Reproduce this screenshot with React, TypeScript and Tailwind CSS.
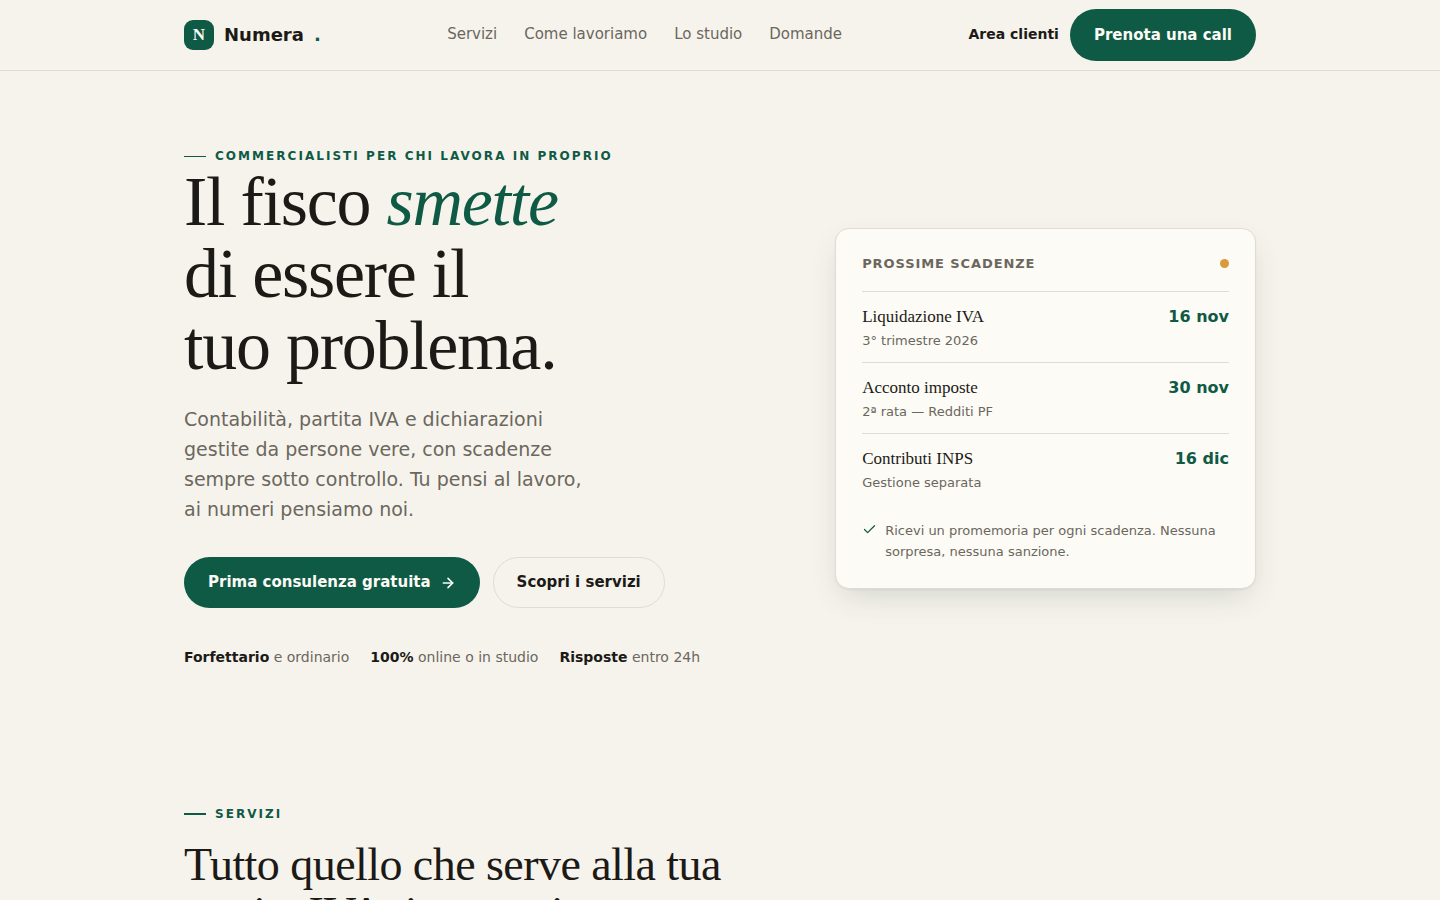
import React from 'react';
import { ArrowRight, Check } from 'lucide-react';

const navItems = [
    { label: 'Servizi', href: '#servizi' },
    { label: 'Come lavoriamo', href: '#metodo' },
    { label: 'Lo studio', href: '#studio' },
    { label: 'Domande', href: '#domande' },
];

const deadlines = [
    { title: 'Liquidazione IVA', detail: '3° trimestre 2026', date: '16 nov' },
    { title: 'Acconto imposte', detail: '2ª rata — Redditi PF', date: '30 nov' },
    { title: 'Contributi INPS', detail: 'Gestione separata', date: '16 dic' },
];

const facts = [
    { strong: 'Forfettario', text: 'e ordinario' },
    { strong: '100%', text: 'online o in studio' },
    { strong: 'Risposte', text: 'entro 24h' },
];

const Eyebrow: React.FC<{ children: React.ReactNode; thick?: boolean }> = ({ children, thick }) => (
    <p className="flex items-center gap-[9px] text-xs leading-5 font-bold uppercase tracking-[0.17em] text-[#0f5a45]">
        <span className={`w-[22px] bg-[#0f5a45] ${thick ? 'h-0.5' : 'h-px'}`} />
        {children}
    </p>
);

const Header: React.FC = () => (
    <header className="border-b border-[#dedcd4]">
        <div className="max-w-[1120px] mx-auto px-6 h-[70px] flex items-center justify-between">
            <a href="#" className="flex items-center gap-2.5 text-lg font-bold">
                <span className="w-[30px] h-[30px] rounded-[9px] bg-[#0f5a45] text-[#fcfbf6] text-[17px] font-['Liberation_Serif',serif] flex items-center justify-center">
                    N
                </span>
                Numera
                <span className="text-[#0f5a45]">.</span>
            </a>

            <nav className="flex items-center gap-[27px] pb-0.5 text-[15px] text-[#6b675d]">
                {navItems.map((item) => (
                    <a key={item.href} href={item.href}>{item.label}</a>
                ))}
            </nav>

            <div className="flex items-center gap-[11px]">
                <a href="#area" className="pb-0.5 text-sm font-bold">Area clienti</a>
                <a
                    href="#call"
                    className="h-[52px] px-6 rounded-full bg-[#0f5a45] text-[#fcfbf6] text-[15px] font-bold flex items-center"
                >
                    Prenota una call
                </a>
            </div>
        </div>
    </header>
);

const DeadlineCard: React.FC = () => (
    <aside className="rounded-[14px] border border-[#dedcd4] bg-[#fcfbf6] px-[26px] pt-[25px] pb-[26px] shadow-[0_1px_2px_rgba(28,26,22,0.05),0_12px_32px_-8px_rgba(20,60,45,0.18)]">
        <div className="flex items-center justify-between pb-[17px]">
            <h2 className="text-[13px] leading-5 font-bold uppercase tracking-[0.07em] text-[#6b675d]">Prossime scadenze</h2>
            <span className="w-[9px] h-[9px] rounded-full bg-[#d99a3d]" />
        </div>

        <ul>
            {deadlines.map((item) => (
                <li key={item.title} className="flex items-start justify-between border-t border-[#dedcd4] pt-3 pb-[11px]">
                    <div>
                        <div className="text-[17px] leading-[26px] font-['Liberation_Serif',serif]">{item.title}</div>
                        <div className="text-[13px] leading-[21px] text-[#6b675d]">{item.detail}</div>
                    </div>
                    <span className="text-base leading-[26px] font-bold text-[#0f5a45]">{item.date}</span>
                </li>
            ))}
        </ul>

        <p className="mt-4 flex items-start gap-2 text-[13px] leading-[21px] text-[#6b675d]">
            <Check size={15} className="mt-0.5 shrink-0 text-[#0f5a45]" />
            Ricevi un promemoria per ogni scadenza. Nessuna sorpresa, nessuna sanzione.
        </p>
    </aside>
);

const Hero: React.FC = () => (
    <section className="max-w-[1120px] mx-auto px-6 pt-[75px] pb-[70px] grid grid-cols-[7fr_5fr] gap-[62px] items-center">
        <div>
            <Eyebrow>Commercialisti per chi lavora in proprio</Eyebrow>
            <h1 className="text-[70px] leading-[72px] tracking-[-0.018em] font-['Liberation_Serif',serif]">
                Il fisco <em className="text-[#0f5a45]">smette</em>
                <br />
                di essere il
                <br />
                tuo problema.
            </h1>
            <p className="mt-[22px] max-w-[420px] text-[19px] leading-[30px] text-[#6b675d]">
                Contabilità, partita IVA e dichiarazioni gestite da persone vere, con scadenze sempre sotto controllo.
                Tu pensi al lavoro, ai numeri pensiamo noi.
            </p>

            <div className="mt-[33px] flex items-center gap-[13px]">
                <a
                    href="#call"
                    className="h-[51px] px-6 rounded-full bg-[#0f5a45] text-[#fcfbf6] text-[15px] font-bold flex items-center gap-[9px]"
                >
                    Prima consulenza gratuita
                    <ArrowRight size={16} strokeWidth={2.4} />
                </a>
                <a
                    href="#servizi"
                    className="h-[51px] px-[23px] rounded-full border border-[#dedcd4] text-[15px] font-bold flex items-center"
                >
                    Scopri i servizi
                </a>
            </div>

            <ul className="mt-9 flex gap-[21px] text-sm leading-[26px] text-[#6b675d]">
                {facts.map((fact) => (
                    <li key={fact.strong}>
                        <strong className="font-bold text-[#1c1a16]">{fact.strong}</strong> {fact.text}
                    </li>
                ))}
            </ul>
        </div>

        <DeadlineCard />
    </section>
);

const Services: React.FC = () => (
    <section id="servizi" className="max-w-[1120px] mx-auto px-6 pt-16 pb-24">
        <Eyebrow thick>Servizi</Eyebrow>
        <h2 className="mt-4 max-w-[620px] text-[46px] leading-[49px] tracking-[-0.012em] font-['Liberation_Serif',serif]">
            Tutto quello che serve alla tua partita IVA, in un unico posto.
        </h2>
    </section>
);

export default function App() {
    return (
        <div className="min-h-screen bg-[#f6f3ec] text-[#1c1a16] font-['DejaVu_Sans',sans-serif]">
            <Header />
            <main>
                <Hero />
                <Services />
            </main>
        </div>
    );
}
